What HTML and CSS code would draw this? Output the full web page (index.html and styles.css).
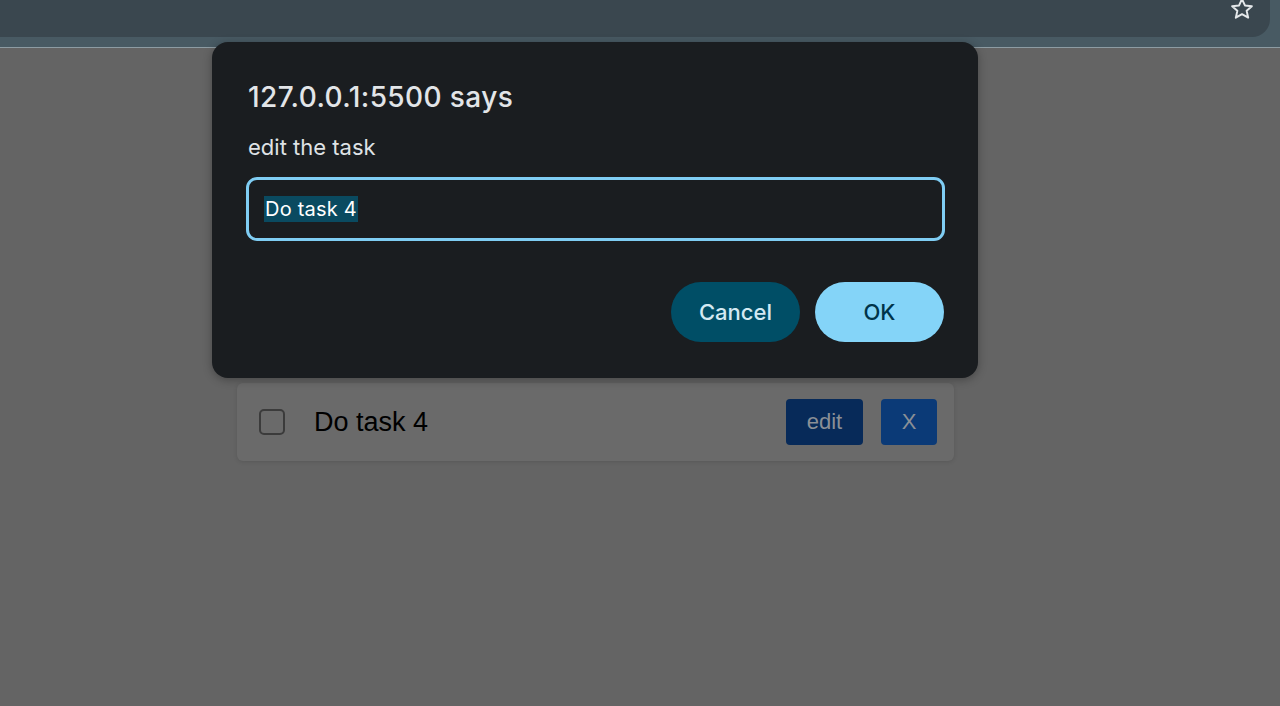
FILE: index.html
```html
<!DOCTYPE html>
<html lang="en">
<head>
<meta charset="utf-8">
<title>Todo</title>
<link rel="stylesheet" href="styles.css">
</head>
<body>
<header class="chrome">
  <div class="omnibox">
    <svg class="star" viewBox="0 0 24 24" width="26" height="26" aria-hidden="true">
      <path d="M12 2.8l2.7 5.9 6.4.7-4.8 4.3 1.4 6.3L12 16.8l-5.7 3.2 1.4-6.3-4.8-4.3 6.4-.7z" fill="none" stroke="#e4e8ea" stroke-width="1.8" stroke-linejoin="round"/>
    </svg>
  </div>
</header>
<main class="page">
  <ul class="tasks">
    <li class="task">
      <span class="checkbox"></span>
      <span class="task-text">Do task 4</span>
      <button class="btn-edit">edit</button>
      <button class="btn-del">X</button>
    </li>
  </ul>
</main>
<div class="dialog" role="dialog">
  <h1 class="dialog-title">127.0.0.1:5500 says</h1>
  <p class="dialog-msg">edit the task</p>
  <div class="dialog-input"><span class="sel">Do task 4</span></div>
  <div class="dialog-actions">
    <button class="btn-cancel">Cancel</button>
    <button class="btn-ok">OK</button>
  </div>
</div>
</body>
</html>
```
FILE: styles.css
```css
html, body {
  margin: 0;
  padding: 0;
  height: 100%;
}
body {
  background: #646464;
  font-family: "Liberation Sans", Arial, sans-serif;
  overflow: hidden;
}
.chrome {
  height: 47px;
  background: #485a63;
  border-bottom: 1px solid #8d9ca3;
}
.omnibox {
  height: 37px;
  margin-right: 10px;
  background: #3a474f;
  border-bottom-right-radius: 18px;
  display: flex;
  justify-content: flex-end;
  align-items: flex-start;
  padding-right: 15px;
}
.star {
  margin-top: -4px;
}
.page {
  padding-top: 335px;
}
.tasks {
  list-style: none;
  margin: 0 0 0 237px;
  padding: 0;
  width: 717px;
}
.task {
  height: 78px;
  box-sizing: border-box;
  background: #6a6a6a;
  border-radius: 6px;
  box-shadow: 0 1px 4px rgba(0,0,0,0.12);
  display: flex;
  align-items: center;
  padding: 0 17px 0 22px;
}
.checkbox {
  width: 22px;
  height: 22px;
  border: 2px solid #3b3b3b;
  border-radius: 5px;
  flex: none;
}
.task-text {
  margin-left: 29px;
  flex: 1;
  font-size: 27px;
  color: #000000;
}
.btn-edit, .btn-del {
  border: none;
  font-family: "Liberation Sans", Arial, sans-serif;
  font-size: 22px;
  color: #8a8f96;
  height: 46px;
  border-radius: 4px;
  padding: 0;
}
.btn-edit {
  width: 77px;
  background: #072a59;
}
.btn-del {
  width: 56px;
  margin-left: 18px;
  background: #0b3a77;
}
.dialog {
  position: absolute;
  left: 212px;
  top: 42px;
  width: 766px;
  height: 336px;
  box-sizing: border-box;
  background: #1a1d20;
  border-radius: 16px;
  padding: 0 34px 0 34px;
  font-family: Inter, "Noto Sans", sans-serif;
  box-shadow: 0 2px 10px rgba(0,0,0,0.3);
}
.dialog-title {
  margin: 0;
  padding-top: 38px;
  padding-left: 2px;
  font-size: 28px;
  font-weight: 500;
  letter-spacing: 0.4px;
  color: #e2e5e8;
  line-height: 34px;
}
.dialog-msg {
  margin: 0;
  padding-top: 18px;
  padding-left: 2px;
  font-size: 22px;
  color: #dfe2e5;
  line-height: 30px;
}
.dialog-input {
  margin-top: 15px;
  height: 64px;
  box-sizing: border-box;
  border: 3px solid #7fcdf3;
  border-radius: 11px;
  display: flex;
  align-items: center;
  padding-left: 15px;
  margin-right: -1px;
}
.sel {
  background: #0a4a60;
  color: #ffffff;
  font-size: 20px;
  letter-spacing: 0.2px;
  line-height: 26px;
  padding: 0 1px;
}
.dialog-actions {
  display: flex;
  justify-content: flex-end;
  gap: 15px;
  margin-top: 41px;
}
.dialog-actions button {
  width: 129px;
  height: 60px;
  border: none;
  border-radius: 30px;
  font-family: Inter, "Noto Sans", sans-serif;
  font-size: 22px;
  font-weight: 500;
}
.btn-cancel {
  background: #004e66;
  color: #d3e9f2;
}
.btn-ok {
  background: #84d4f8;
  color: #00344a;
}
```
